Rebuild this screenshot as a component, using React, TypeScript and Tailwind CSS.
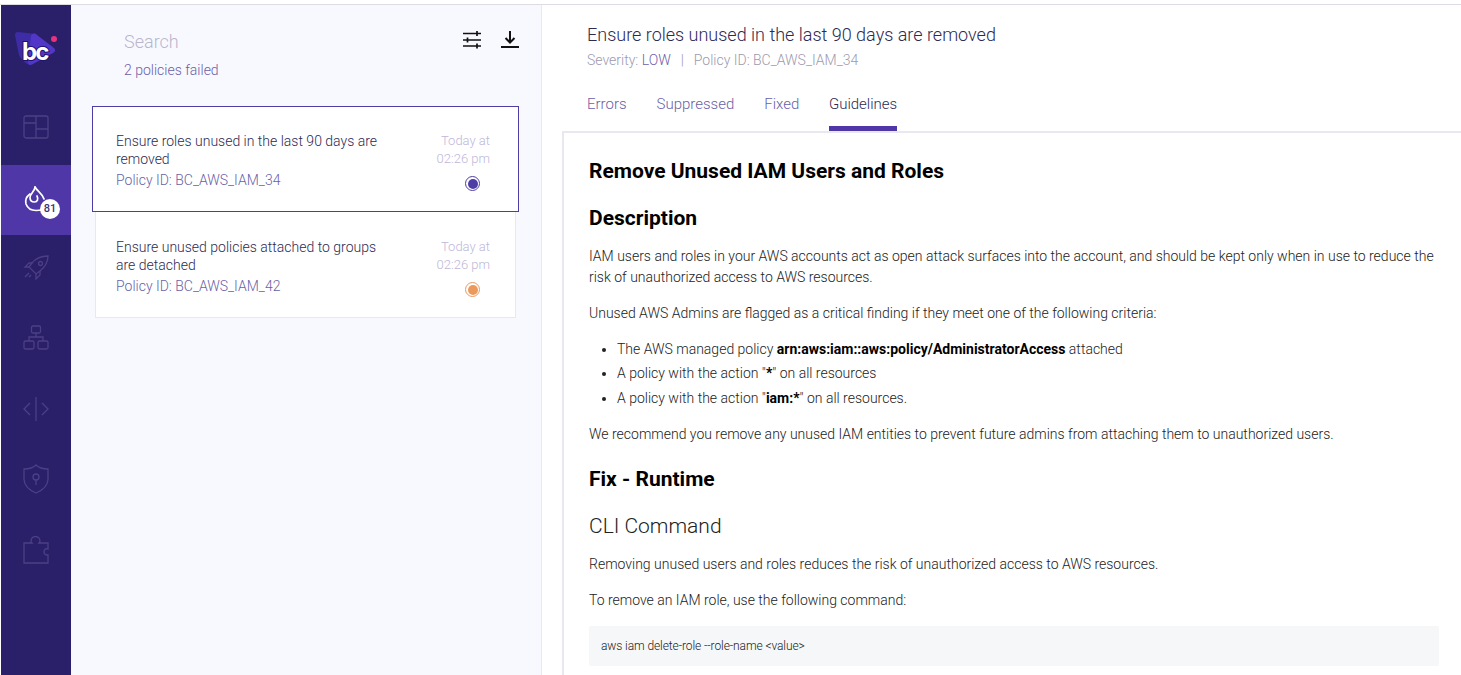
import React from "react";

const policies = [
  {
    title: "Ensure roles unused in the last 90 days are removed",
    id: "BC_AWS_IAM_34",
    color: "bg-[#4f3da6]",
    ring: "border-[#4f3da6]",
    selected: true,
  },
  {
    title: "Ensure unused policies attached to groups are detached",
    id: "BC_AWS_IAM_42",
    color: "bg-[#ec9a5c]",
    ring: "border-[#ec9a5c]",
    selected: false,
  },
];

const navStroke = "#4c3f85";

const Logo = () => (
  <svg width="44" height="40" viewBox="0 0 44 40" fill="none">
    <path d="M1 6 C 1 4 2 3 4 3 L 22 5 L 16 36 C 10 34 7 30 5 26 Z" fill="#3d2ca6" />
    <path d="M17 7 C 18 4 21 4 23 6 L 40 19 C 42 21 41 23 39 24 L 19 35 C 16 37 14 36 14 33 Z" fill="#5236c8" />
    <circle cx="40" cy="10" r="3" fill="#e8317f" />
    <text x="8" y="31" fontFamily="Inter, sans-serif" fontSize="24" fontWeight="700" fill="#fff" stroke="#1d1270" strokeWidth="2" paintOrder="stroke" letterSpacing="-2">bc</text>
  </svg>
);

const icons = [
  <svg key="a" width="26" height="24" viewBox="0 0 26 24" fill="none" stroke={navStroke} strokeWidth="1.3">
    <rect x="1" y="1" width="24" height="22" rx="2" />
    <path d="M13 1v22M1 8h12M13 14h12" />
  </svg>,
  null,
  <svg key="b" width="26" height="26" viewBox="0 0 26 26" fill="none" stroke={navStroke} strokeWidth="1.3">
    <path d="M25 1c-7 0-12 2-16 7l-3 4 7 7 4-3c5-4 8-9 8-15z" />
    <circle cx="17.5" cy="8.5" r="2" />
    <path d="M6 12H2l4-4h3M13 19v5l4-4v-4M6 18l-4 4M8 20l-2 2" />
  </svg>,
  <svg key="c" width="26" height="26" viewBox="0 0 26 26" fill="none" stroke={navStroke} strokeWidth="1.3">
    <rect x="8.5" y="1" width="9" height="7" rx="1.5" />
    <rect x="1" y="16" width="10" height="8" rx="1.5" />
    <rect x="15" y="16" width="10" height="8" rx="1.5" />
    <path d="M13 8v4M6 16v-4h14v4" />
  </svg>,
  <svg key="d" width="26" height="26" viewBox="0 0 26 26" fill="none" stroke={navStroke} strokeWidth="1.3">
    <path d="M7 7l-6 6 6 6M19 7l6 6-6 6M13 1v24" />
  </svg>,
  <svg key="e" width="26" height="30" viewBox="0 0 26 30" fill="none" stroke={navStroke} strokeWidth="1.3">
    <path d="M13 1c3 3 7 4 12 4v10c0 6-5 11-12 14C6 26 1 21 1 15V5c5 0 9-1 12-4z" />
    <circle cx="13" cy="13" r="3" />
    <path d="M13 16v5" />
  </svg>,
  <svg key="f" width="26" height="28" viewBox="0 0 26 28" fill="none" stroke={navStroke} strokeWidth="1.3">
    <path d="M1 7h8c-1-1-1-2-1-2a4.500 4.500 0 0 1 9 0s0 1-1 2h9v6c-3-1-4 1-4 3s2 3 4 3v8H1z" />
  </svg>,
];

const Sidebar = () => (
  <div className="w-[70px] ml-px bg-[#2a2069] flex flex-col shrink-0">
    <div className="h-[90px] flex items-center justify-center pb-[2px]">
      <Logo />
    </div>
    {icons.map((icon, i) =>
      icon ? (
        <div key={i} className={i === 0 ? "h-[70px] pb-[6px] flex items-center justify-center" : "h-[70.500px] pb-[5px] flex items-center justify-center"}>
          {icon}
        </div>
      ) : (
        <div key={i} className="h-[70px] bg-[#4f37a8] flex items-center justify-center relative">
          <svg width="30" height="30" viewBox="0 0 30 30" fill="none" stroke="#fff" strokeWidth="1.7" strokeLinecap="round">
            <path d="M9 9C5.500 11.500 4 15 5 19C6.500 23 10.500 25.500 15 25.500L21 25" />
            <path d="M14 2C14 6 9 9 9 12.500C9 15.500 11 17 13.500 17C16.500 17 17.500 14 16 11" />
            <path d="M14 2C16 6 21 8 23 14" />
          </svg>
          <span className="absolute left-[39px] top-[34px] w-5 h-5 rounded-full bg-white text-[#3c3370] text-[11px] font-medium flex items-center justify-center">
            81
          </span>
        </div>
      )
    )}
  </div>
);

const PolicyCard = ({ p }: { p: (typeof policies)[number] }) => (
  <div
    className={
      p.selected
        ? "bg-white border border-[#4f3da6] h-[106px] -mx-[3px] pl-[23px] pr-[28px] pt-[25px] flex relative"
        : "bg-white border border-[#e8e9f0] border-t-0 h-[106px] pl-[20px] pr-[25px] pt-[26px] flex"
    }
  >
    <div className="flex-1 min-w-0">
      <div className="w-[270px] text-[14px] leading-[18px] text-[#2e2a52] font-light">{p.title}</div>
      <div className="text-[14px] leading-[18px] mt-[3px] text-[#6a5fa8] font-light">Policy ID: {p.id}</div>
    </div>
    <div className="w-[60px] flex flex-col items-end">
      <div className="text-[13px] leading-[18px] text-[#bdb8d8] font-light text-right">
        Today at
        <br />
        02:26 pm
      </div>
      <div className={`mt-[8px] mr-[10px] w-[15px] h-[15px] rounded-full border ${p.ring} flex items-center justify-center`}>
        <div className={`w-[10px] h-[10px] rounded-full ${p.color}`} />
      </div>
    </div>
  </div>
);

export default function App() {
  return (
    <div className="h-[675px] w-[1461px] overflow-hidden bg-white font-['Roboto',sans-serif] flex flex-col">
      <div className="h-[5px] border-b border-[#dcdce2] shrink-0" />
      <div className="flex flex-1 min-h-0">
        <Sidebar />
        <div className="w-[471px] shrink-0 bg-[#f8f9ff] border-r border-[#e8e9f0] pl-[24px] pr-[25px]">
          <div className="flex justify-between h-[101px] pt-[25px] pl-[29px]">
            <div>
              <div className="text-[18px] leading-[24px] text-[#b9b6cc] font-light">Search</div>
              <div className="text-[14px] leading-[20px] mt-[6px] text-[#6a5fa8] font-light">2 policies failed</div>
            </div>
            <div className="flex gap-[20px] -mr-[3px] h-fit">
              <svg width="18" height="19" viewBox="0 0 18 19" fill="none" stroke="#111" strokeWidth="1.700">
                <path d="M0 3.500h18M0 10h18M0 16h18M14 1v5M4.500 7.500v5M14 13.500v5" />
              </svg>
              <svg width="18" height="18" viewBox="0 0 18 18" fill="none" stroke="#111" strokeWidth="2">
                <path d="M0 17h18M9 1v11M4.500 8l4.500 4.500 4.500-4.500" />
              </svg>
            </div>
          </div>
          <div>
            {policies.map((p) => (
              <PolicyCard key={p.id} p={p} />
            ))}
          </div>
        </div>
        <div className="flex-1 min-w-0">
          <div className="pl-[45px] pt-[20px]">
            <div className="text-[18px] leading-[20px] text-[#2e2a52] font-light">Ensure roles unused in the last 90 days are removed</div>
            <div className="text-[14px] leading-[18px] mt-[6px] text-[#9c9ab0] font-light">
              Severity: <span className="text-[#6a5fa8]">LOW</span>
              <span className="mx-[10px]">|</span>Policy ID: BC_AWS_IAM_34
            </div>
            <div className="flex gap-[30px] mt-[25px] text-[15px] leading-[20px] text-[#6a5fa8] font-light">
              <div className="h-[37px]">Errors</div>
              <div className="h-[37px]">Suppressed</div>
              <div className="h-[37px]">Fixed</div>
              <div className="h-[37px] -ml-[0.500px] text-[#2e2a52] border-b-[5px] border-[#4f37a8]">Guidelines</div>
            </div>
          </div>
          <div className="ml-[20px] border-l-2 border-t-2 border-[#e8e9f0] h-full pl-[25px] pr-[22px] pt-[25px] text-[14px] leading-[21px] text-[#222] font-light">
            <h1 className="text-[21px] leading-[26px] font-bold text-black">Remove Unused IAM Users and Roles</h1>
            <h2 className="text-[21px] leading-[26px] font-bold text-black mt-[21px]">Description</h2>
            <p className="mt-[15px]">
              IAM users and roles in your AWS accounts act as open attack surfaces into the account, and should be kept only when in use to reduce the risk of unauthorized access to AWS resources.
            </p>
            <p className="mt-[15px]">Unused AWS Admins are flagged as a critical finding if they meet one of the following criteria:</p>
            <ul className="list-disc pl-[28px] mt-[15px]">
              <li className="mb-[3px]">
                The AWS managed policy <b className="font-bold text-black">arn:aws:iam::aws:policy/AdministratorAccess</b> attached
              </li>
              <li className="mb-[4px]">
                A policy with the action "<b className="font-bold text-black">*</b>" on all resources
              </li>
              <li>
                A policy with the action "<b className="font-bold text-black">iam:*</b>" on all resources.
              </li>
            </ul>
            <p className="mt-[15px]">We recommend you remove any unused IAM entities to prevent future admins from attaching them to unauthorized users.</p>
            <h2 className="text-[21px] leading-[26px] font-bold text-black mt-[21px]">Fix - Runtime</h2>
            <h3 className="text-[21px] leading-[26px] text-[#222] mt-[21px] font-light">CLI Command</h3>
            <p className="mt-[15px]">Removing unused users and roles reduces the risk of unauthorized access to AWS resources.</p>
            <p className="mt-[15px]">To remove an IAM role, use the following command:</p>
            <div className="mt-[15px] bg-[#f6f7f9] rounded-[2px] h-[40px] px-[12px] flex items-center text-[12px] tracking-[-0.1px]">aws iam delete-role --role-name &lt;value&gt;</div>
          </div>
        </div>
      </div>
    </div>
  );
}
